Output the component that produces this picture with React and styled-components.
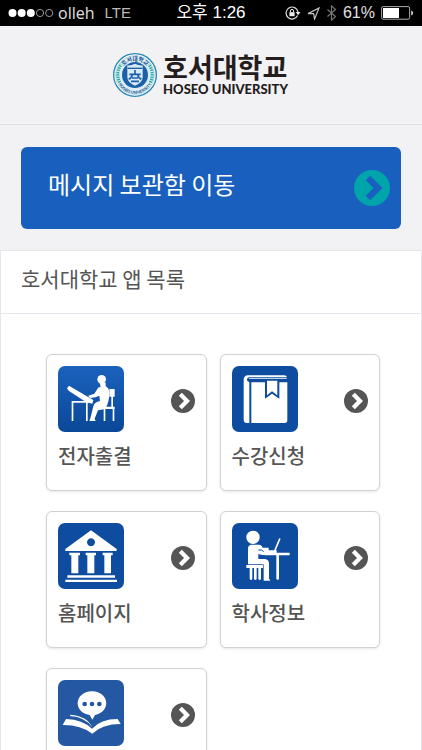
import React from 'react';
import styled, { createGlobalStyle } from 'styled-components';

const GlobalStyle = createGlobalStyle`
  * {
    box-sizing: border-box;
  }

  body {
    margin: 0;
    background-color: #f2f2f5;
    font-family: 'Liberation Sans', 'Noto Sans CJK KR', sans-serif;
    color: #555;
  }
`;

const StatusBar = styled.div`
  display: grid;
  grid-template-columns: 1fr auto 1fr;
  align-items: center;
  height: 26px;
  padding: 0 8px;
  background-color: #000;
  color: #e0e0e0;
  font-size: 16px;
  line-height: 26px;
`;

const StatusGroup = styled.div`
  display: flex;
  align-items: center;
  gap: ${(props) => props.$gap};
  justify-content: ${(props) => (props.$end ? 'flex-end' : 'flex-start')};
`;

const Carrier = styled.span`
  font-family: 'Open Sans', sans-serif;
  margin-right: 6px;
`;

const Network = styled.span`
  font-family: 'Liberation Sans', sans-serif;
  font-size: 15px;
  color: #bbb;
`;

const Clock = styled.div`
  color: #fff;
  font-size: 17px;
`;

const Header = styled.header`
  display: flex;
  align-items: center;
  justify-content: center;
  height: 99px;
  padding-right: 21px;
  border-bottom: 1px solid #e2e2e6;
`;

const Brand = styled.a`
  display: flex;
  align-items: center;
  gap: 6px;
  color: #251c1c;
  text-decoration: none;
`;

const BrandText = styled.span`
  display: flex;
  flex-direction: column;
`;

const BrandName = styled.span`
  font-family: 'Noto Sans CJK KR', sans-serif;
  font-size: 27px;
  font-weight: 700;
  line-height: 28px;
`;

const BrandSub = styled.span`
  font-family: Lato, sans-serif;
  font-size: 13px;
  font-weight: 900;
  line-height: 16px;
`;

const BannerWrap = styled.div`
  padding: 22px 21px 21px;
`;

const Banner = styled.button`
  display: flex;
  align-items: center;
  justify-content: space-between;
  width: 100%;
  height: 82px;
  padding: 0 11px 0 27px;
  border: none;
  border-radius: 6px;
  background-color: #195fbe;
  color: #fff;
  font-family: 'Noto Sans CJK KR', sans-serif;
  font-size: 24px;
  cursor: pointer;
`;

const BannerText = styled.span`
  line-height: 30px;
  padding-bottom: 8px;
`;

const Panel = styled.section`
  border: 1px solid #e6e6ea;
  background-color: #fff;
`;

const PanelTitle = styled.h1`
  margin: 0;
  padding: 12px 20px 20px;
  border-bottom: 1px solid #e3e6ec;
  font-family: 'Noto Sans CJK KR', sans-serif;
  font-size: 21px;
  font-weight: 400;
  line-height: 30px;
`;

const AppGrid = styled.div`
  display: grid;
  grid-template-columns: 1fr 1fr;
  gap: 20px 13px;
  padding: 40px 41px 40px 45px;
`;

const Card = styled.a`
  display: flex;
  flex-direction: column;
  gap: 9px;
  min-height: 137px;
  padding: 11px;
  border: 1px solid #d2d2d2;
  border-radius: 6px;
  background-color: #fff;
  box-shadow: 0 1px 3px rgba(0, 0, 0, 0.1);
  color: #555;
  text-decoration: none;
`;

const CardTop = styled.span`
  display: flex;
  justify-content: space-between;
`;

const CardArrow = styled.span`
  display: flex;
  padding-top: 23px;
`;

const Tile = styled.span`
  display: block;
  width: 66px;
  height: 66px;
  overflow: hidden;
  border-radius: 7px;
  background: ${(props) => props.$background};

  & svg {
    display: block;
    width: 100%;
    height: 100%;
  }
`;

const CardLabel = styled.span`
  font-family: 'Noto Sans CJK KR', sans-serif;
  font-size: 20px;
  font-weight: 500;
  line-height: 30px;
`;

const ArrowCircle = ({ size, fill, arrow }) => (
  <svg width={size} height={size} viewBox="0 0 108 108" aria-hidden="true">
    <circle cx="54" cy="54" r="54" fill={fill} />
    <path
      d="M42 24l30 30-30 30"
      fill="none"
      stroke={arrow}
      strokeWidth="19"
      strokeLinejoin="miter"
    />
  </svg>
);

const SignalDots = () => (
  <svg width="46" height="10" viewBox="0 0 46 10" aria-hidden="true">
    <circle cx="4.5" cy="5" r="4" fill="#fff" />
    <circle cx="13.7" cy="5" r="4" fill="#fff" />
    <circle cx="22.8" cy="5" r="4" fill="#fff" />
    <circle cx="32" cy="5" r="3.6" fill="none" stroke="#999" />
    <circle cx="41.2" cy="5" r="3.6" fill="none" stroke="#999" />
  </svg>
);

const RotationLock = () => (
  <svg width="16" height="14" viewBox="0 0 16 14" aria-hidden="true">
    <path d="M12.6 9.4A6 6 0 1 1 13 6" fill="none" stroke="#ddd" strokeWidth="1.2" />
    <path d="M10.7 6h4.8l-2.4 3.2z" fill="#eee" />
    <rect x="4.4" y="6.2" width="5.2" height="4" fill="#eee" />
    <path d="M5.4 6.4V5a1.6 1.6 0 0 1 3.2 0v1.4" fill="none" stroke="#eee" strokeWidth="1" />
  </svg>
);

const LocationArrow = () => (
  <svg width="13" height="13" viewBox="0 0 13 13" aria-hidden="true">
    <path d="M1 6.6L12 1 7.6 12 6.6 6.6z" fill="none" stroke="#c4c4c4" strokeWidth="1.2" />
  </svg>
);

const Bluetooth = () => (
  <svg width="11" height="16" viewBox="0 0 11 18" aria-hidden="true">
    <path d="M1 5l9 8-4.5 4V1L10 5l-9 8" fill="none" stroke="#777" strokeWidth="1.3" />
  </svg>
);

const Battery = () => (
  <svg width="33" height="14" viewBox="0 0 33 14" aria-hidden="true">
    <rect x=".6" y=".6" width="28" height="12.6" rx="1.5" fill="none" stroke="#aaa" />
    <rect x="2" y="2" width="16" height="10" fill="#fff" />
    <path d="M30.2 4.5c2.6.8 2.6 4.2 0 5z" fill="#ccc" />
  </svg>
);

const Seal = () => (
  <svg width="44" height="44" viewBox="0 0 132 132" role="img" aria-label="호서대학교">
    <defs>
      <path id="sealTop" d="M23 66a43 43 0 0 1 86 0" />
      <path id="sealBottom" d="M10 66a56 56 0 0 0 112 0" />
    </defs>
    <circle cx="66" cy="66" r="64" fill="#fff" stroke="#2686b8" strokeWidth="4" />
    <circle cx="66" cy="66" r="58" fill="#dceef4" stroke="#8ec2d8" strokeWidth="2" />
    <g fill="none" stroke="#26a99a" strokeWidth="9" strokeDasharray="4 3">
      <path d="M20 88a51 51 0 0 1 5-54" />
      <path d="M112 88a51 51 0 0 0-5-54" />
    </g>
    <circle cx="66" cy="66" r="39" fill="#1c60a8" />
    <text fontFamily="Noto Sans CJK KR" fontSize="17" fontWeight="700" fill="#174f91" textAnchor="middle">
      <textPath href="#sealTop" startOffset="50%">호서대학교</textPath>
    </text>
    <text fontFamily="Liberation Sans" fontSize="12" fontWeight="700" fill="#174f91" textAnchor="middle">
      <textPath href="#sealBottom" startOffset="50%">HOSEO UNIVERSITY</textPath>
    </text>
    <path d="M43 37q12 1 23-5 11 6 23 5v36q-1 17-23 25-22-8-23-25z" fill="#d9e9f5" />
    <path d="M44 46h44" stroke="#1c60a8" strokeWidth="4" />
    <path
      d="M66 51v11M49 64h34M58 64q-2 11-11 15M74 64q2 11 11 15M54 85h24M57 75h18"
      fill="none"
      stroke="#1c60a8"
      strokeWidth="5"
    />
  </svg>
);

const DraftingIcon = () => (
  <svg viewBox="0 0 198 198" fill="#fff" aria-hidden="true">
    <path d="M27 67l6-8 73 43-3 11-9-2-5-1v55h-5v-55H46v55h-5v-60h38L32 74z" />
    <circle cx="131" cy="40" r="13" />
    <path d="M125 50h18v11q10 4 11 20 0 24-9 41h25v7h-1v36h-5v-36h-22v36h-5v-35l-17 3-10 25q0 4 4 7H95q-1-4 2-8l9-36q4-13 20-16l-2-16q-10 6-26 7-6-2-7-7l18-6 9-14q2-6 10-7z" />
    <path d="M154 69h16v23h-5v32h-5V92h-6z" />
  </svg>
);

const BookIcon = () => (
  <svg viewBox="0 0 198 198" fill="#fff" aria-hidden="true">
    <path d="M48 28h108q8 0 9 6H52q-6 0-7 6t7 8v123h-8q-8 0-9-9V40q1-11 13-12z" />
    <path d="M58 49h41v49l21-15 22 15V49h24v114q0 8-8 8H58z" />
    <path d="M51 37h113v2H51z" />
    <path d="M105 44h31v44l-16-12-15 12z" />
  </svg>
);

const HallIcon = () => (
  <svg viewBox="0 0 198 198" fill="#fff" aria-hidden="true">
    <path d="M99 22l77 56v6H22v-6zm0 24a12 12 0 1 0 .1 0z" fillRule="evenodd" />
    <path d="M34 89h32v8h-5v54H40V97h-6zM83 89h31v8h-5v54H88V97h-5zM134 89h30v8h-5v54h-20V97h-5z" />
    <path d="M28 157h143v7H28zM22 170h155v7H22z" />
  </svg>
);

const DeskIcon = () => (
  <svg viewBox="0 0 198 198" fill="#fff" aria-hidden="true">
    <circle cx="63" cy="43" r="20" />
    <path d="M48 76q1-11 11-11h20q7 0 10 4l3 5h18v8h24v7h39v8h-32v70q-4 7-8 0V97h-30q-12 0-24-4v15h20q11 1 12 13v46q4 3 3 6H95v-49H48z" />
    <path d="M43 126h50v9h-6v33q-4 6-8 0v-33h-5v33q-4 6-8 0v-33h-5v33q-4 6-8 0v-33H43z" />
    <path d="M128 84l15-36" stroke="#fff" strokeWidth="5" strokeLinecap="round" />
    <path d="M79 81h10l6 5" fill="none" stroke="#0d4c9f" strokeWidth="3" />
  </svg>
);

const ReadingIcon = () => (
  <svg viewBox="0 0 198 198" fill="#fff" aria-hidden="true">
    <path d="M102 34c54 2 57 62 9 71l-8 14-8-14C45 98 47 36 102 34z" />
    <g fill="#2558a3">
      <circle cx="80" cy="72" r="7" />
      <circle cx="102" cy="72" r="7" />
      <circle cx="124" cy="72" r="7" />
    </g>
    <path d="M24 117q50 2 78 29 26-29 77-29l9 15q-56 0-85 29-36-27-89-26z" />
    <path d="M37 104q50 4 66 38-21-31-67-34z" />
  </svg>
);

const NAVY = '#0d4c9f';

const apps = [
  { name: '전자출결', Icon: DraftingIcon, background: 'linear-gradient(#1b62bd, #0a4797)' },
  { name: '수강신청', Icon: BookIcon, background: NAVY },
  { name: '홈페이지', Icon: HallIcon, background: NAVY },
  { name: '학사정보', Icon: DeskIcon, background: NAVY },
  { name: '', Icon: ReadingIcon, background: '#2558a3' },
];

const AppCard = ({ name, Icon, background }) => (
  <Card href="#">
    <CardTop>
      <Tile $background={background}>
        <Icon />
      </Tile>
      <CardArrow>
        <ArrowCircle size={24} fill="#555" arrow="#fff" />
      </CardArrow>
    </CardTop>
    <CardLabel>{name}</CardLabel>
  </Card>
);

const App = () => {
  return (
    <>
      <GlobalStyle />
      <StatusBar>
        <StatusGroup $gap="4px">
          <SignalDots />
          <Carrier>olleh</Carrier>
          <Network>LTE</Network>
        </StatusGroup>
        <Clock>오후 1:26</Clock>
        <StatusGroup $gap="6px" $end>
          <RotationLock />
          <LocationArrow />
          <Bluetooth />
          <span>61%</span>
          <Battery />
        </StatusGroup>
      </StatusBar>
      <Header>
        <Brand href="#">
          <Seal />
          <BrandText>
            <BrandName>호서대학교</BrandName>
            <BrandSub>HOSEO UNIVERSITY</BrandSub>
          </BrandText>
        </Brand>
      </Header>
      <main>
        <BannerWrap>
          <Banner type="button">
            <BannerText>메시지 보관함 이동</BannerText>
            <ArrowCircle size={36} fill="#00a5ac" arrow="#195fbe" />
          </Banner>
        </BannerWrap>
        <Panel>
          <PanelTitle>호서대학교 앱 목록</PanelTitle>
          <AppGrid>
            {apps.map((app, index) => (
              <AppCard key={index} {...app} />
            ))}
          </AppGrid>
        </Panel>
      </main>
    </>
  );
};

export default App;
